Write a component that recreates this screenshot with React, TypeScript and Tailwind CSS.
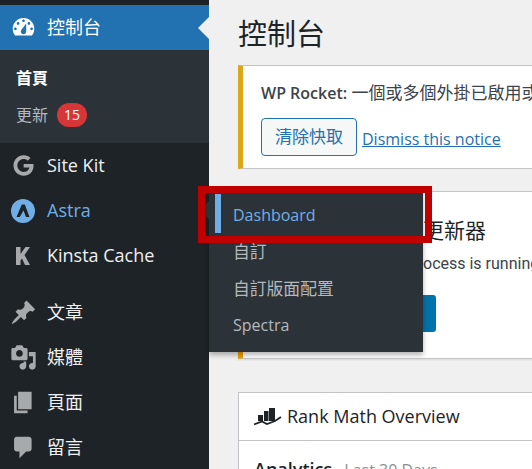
import { FaGoogle } from "react-icons/fa";

const CJK = "font-['Open_Sans','Noto_Sans_CJK_TC',sans-serif]";

function Dashicon({ d, className }: { d: string; className?: string }) {
  return (
    <svg viewBox="0 0 20 20" className={className} fill="currentColor" fillRule="evenodd">
      <path d={d} />
    </svg>
  );
}

const paths = {
  dashboard:
    "M3.76 16h12.48c1.1-1.37 1.76-3.11 1.76-5 0-4.42-3.58-8-8-8s-8 3.58-8 8c0 1.89.66 3.63 1.76 5zM10 4c.55 0 1 .45 1 1s-.45 1-1 1-1-.45-1-1 .45-1 1-1zM6 6c.55 0 1 .45 1 1s-.45 1-1 1-1-.45-1-1 .45-1 1-1zm8 0c.55 0 1 .45 1 1s-.45 1-1 1-1-.45-1-1 .45-1 1-1zm-5.37 5.55L12 7v6c0 1.1-.9 2-2 2s-2-.9-2-2c0-.57.24-1.08.63-1.45zM4 10c.55 0 1 .45 1 1s-.45 1-1 1-1-.45-1-1 .45-1 1-1zm12 0c.55 0 1 .45 1 1s-.45 1-1 1-1-.45-1-1 .45-1 1-1z",
  post: "M10.44 3.02l1.82-1.82 6.36 6.35-1.83 1.82c-1.05-.68-2.48-.57-3.41.36l-.75.75c-.92.93-1.04 2.35-.35 3.41l-1.83 1.82-2.41-2.41-2.8 2.79c-.42.42-3.38 2.71-3.8 2.29s1.86-3.39 2.28-3.81l2.79-2.79L4.1 9.36l1.83-1.82c1.05.69 2.48.57 3.4-.36l.75-.75c.93-.92 1.05-2.35.36-3.41z",
  media:
    "M13 11V4c0-.55-.45-1-1-1h-1.67L9 1H5L3.67 3H2c-.55 0-1 .45-1 1v7c0 .55.45 1 1 1h10c.55 0 1-.45 1-1zM7 4.5c1.38 0 2.5 1.12 2.5 2.5S8.38 9.5 7 9.5 4.5 8.38 4.5 7 5.62 4.5 7 4.5zM14 6h5v10.5c0 1.38-1.12 2.5-2.5 2.5S14 17.88 14 16.5s1.12-2.5 2.5-2.5c.17 0 .34.02.5.05V9h-3V6zm-4 8.05V13h2v3.5c0 1.38-1.12 2.5-2.5 2.5S7 17.88 7 16.5 8.12 14 9.5 14c.17 0 .34.02.5.05z",
  page: "M6 15V2h10v13H6zm-1 1h8v2H3V5h2v11z",
  comment: "M5 2h9c1.1 0 2 .9 2 2v7c0 1.1-.9 2-2 2h-2l-5 5v-5H5c-1.1 0-2-.9-2-2V4c0-1.1.9-2 2-2z",
};

function AstraIcon() {
  return (
    <svg viewBox="0 0 24 24" className="h-[24px] w-[24px]">
      <circle cx="12" cy="12" r="12" fill="#72aee6" />
      <path d="M10.800 5.500h3L18.500 18H15l-2.500-6.500L8.800 18H5.500z" fill="#1d2327" />
    </svg>
  );
}

function KinstaIcon() {
  return (
    <svg viewBox="0 0 14 18" className="h-[18px] w-[14px]" fill="#a7aaad">
      <path d="M0 0h4.500v7L9.500 0H14L8.500 8 14 18H9L6 11.500l-1.500 2V18H0z" />
    </svg>
  );
}

function MenuRow({
  icon,
  label,
  className,
}: {
  icon: React.ReactNode;
  label: string;
  className?: string;
}) {
  return (
    <div className={`flex h-[45px] items-center text-[18px] ${className ?? "text-[#f0f0f1]"}`}>
      <div className="flex w-[47px] shrink-0 items-center justify-center pr-[1px] text-[#a7aaad]">{icon}</div>
      <span className="whitespace-nowrap">{label}</span>
    </div>
  );
}

function Sidebar() {
  return (
    <aside className="relative h-[469px] w-[209px] shrink-0 overflow-hidden bg-[#1d2327]">
      <div className="h-[5px]" />
      <div className="relative flex h-[45px] items-center bg-[#2271b1] text-[18px] text-white">
        <div className="flex w-[47px] shrink-0 items-center justify-center">
          <Dashicon d={paths.dashboard} className="h-[27px] w-[27px]" />
        </div>
        <span>控制台</span>
        <div className="absolute right-0 top-[12px] h-0 w-0 border-y-[11px] border-r-[11px] border-y-transparent border-r-[#f0f0f1]" />
      </div>
      <div className="h-[93px] bg-[#2c3338] pl-[16px] pt-[16px] text-[16px]">
        <div className="font-bold leading-[24px] text-white">首頁</div>
        <div className="mt-[13px] flex items-center gap-[9px] leading-[24px] text-[#b4b9be]">
          <span>更新</span>
          <span className="flex h-[24px] w-[30px] items-center justify-center rounded-full bg-[#d63638] text-[14px] text-white">
            15
          </span>
        </div>
      </div>
      <MenuRow icon={<FaGoogle className="h-[21px] w-[21px]" />} label="Site Kit" />
      <MenuRow icon={<AstraIcon />} label="Astra" className="text-[#72aee6]" />
      <MenuRow icon={<KinstaIcon />} label="Kinsta Cache" />
      <div className="h-[12px]" />
      <MenuRow icon={<Dashicon d={paths.post} className="h-[27px] w-[27px]" />} label="文章" />
      <MenuRow icon={<Dashicon d={paths.media} className="h-[27px] w-[27px]" />} label="媒體" />
      <MenuRow icon={<Dashicon d={paths.page} className="h-[27px] w-[27px]" />} label="頁面" />
      <MenuRow icon={<Dashicon d={paths.comment} className="h-[27px] w-[27px]" />} label="留言" />
    </aside>
  );
}

function Flyout() {
  return (
    <div className="absolute left-[209px] top-[190px] z-10 h-[162px] w-[214px] bg-[#2c3338] text-[#b4b9be] shadow-[0_3px_5px_rgba(0,0,0,0.3)]">
      <div className="absolute right-full top-[11px] h-0 w-0 border-y-[9px] border-r-[9px] border-y-transparent border-r-[#2c3338]" />
      <div className="flex flex-col pl-[24px] pt-[7px] text-[16.800px] leading-[37px]">
        <div className="relative h-[36px] text-[16px] text-[#72aee6]">
          <span className="absolute -left-[18px] top-[-3px] h-[39px] w-[6px] bg-[#72aee6]" />
          Dashboard
        </div>
        <div>自訂</div>
        <div>自訂版面配置</div>
        <div className="text-[16px]">Spectra</div>
      </div>
    </div>
  );
}

function RankMathIcon() {
  return (
    <svg viewBox="0 0 28 20" className="h-[20px] w-[28px]" fill="#1d2327">
      <path d="M4 8h5v6H4zM10 4h4.500v10H10zM15 1h6v13h-6z" />
      <path d="M0 17.500 8 14.500l5 2.500 8-3 6-4" fill="none" stroke="#1d2327" strokeWidth="1.800" />
    </svg>
  );
}

function Main() {
  return (
    <main className="h-[469px] min-w-0 flex-1 overflow-hidden bg-[#f0f0f1] pl-[29px]">
      <h1 className="h-[65px] whitespace-nowrap pt-[14px] text-[29px] leading-[40px] font-normal text-[#1d2327]">控制台</h1>

      <section className="h-[104px] w-[420px] border border-l-[5px] border-[#c3c4c7] border-l-[#dba617] bg-white pl-[18px] pt-[15px] text-[#3c434a]">
        <p className="whitespace-nowrap text-[17px] leading-[24px]">
          <strong className="text-[16px] font-semibold">WP Rocket:</strong> 一個或多個外掛已啟用或停用，請清除快取
        </p>
        <div className="mt-[13px] flex items-end gap-[5px] whitespace-nowrap">
          <button
            type="button"
            className="h-[38px] w-[96px] rounded-[4px] border border-[#2271b1] bg-[#f6f7f7] text-[17px] text-[#2271b1]"
          >
            清除快取
          </button>
          <a className="pb-[5px] text-[16px] leading-[24px] text-[#2271b1] underline">Dismiss this notice</a>
        </div>
      </section>

      <section className="mt-[22px] h-[168px] w-[420px] border border-l-[5px] border-[#c3c4c7] border-l-[#f0a000] bg-white pl-[180px] pt-[23px] text-[#1d2327] shadow-[0_1px_2px_rgba(0,0,0,0.1)]">
        <h2 className="whitespace-nowrap text-[21px] leading-[30px]">更新器</h2>
        <p className="mt-[5px] whitespace-nowrap font-['Roboto',sans-serif] text-[16px] leading-[28px] text-[#3c434a]">
          ocess is running
        </p>
        <div className="ml-[-40px] mt-[17px] h-[37px] w-[53px] rounded-r-[3px] bg-[#0073aa]" />
      </section>

      <section className="mt-[33px] w-[420px] border border-[#c3c4c7] bg-white">
        <div className="flex h-[48px] items-center gap-[5px] border-b border-[#c3c4c7] pl-[15px] text-[18px] font-medium text-[#1d2327]">
          <RankMathIcon />
          <span>Rank Math Overview</span>
        </div>
        <div className="whitespace-nowrap pl-[15px] pt-[14px] leading-[28px]">
          <span className="text-[18px] font-semibold text-[#1d2327]">Analytics</span>
          <span className="ml-[12px] text-[16px] text-[#8c8f94]">Last 30 Days</span>
        </div>
      </section>
    </main>
  );
}

export default function App() {
  return (
    <div className={`relative flex h-[469px] w-[532px] overflow-hidden ${CJK}`}>
      <Sidebar />
      <Main />
      <Flyout />
      <div className="absolute left-[198px] top-[186px] z-20 h-[57px] w-[234px] border-[7px] border-[#c00000]" />
    </div>
  );
}
